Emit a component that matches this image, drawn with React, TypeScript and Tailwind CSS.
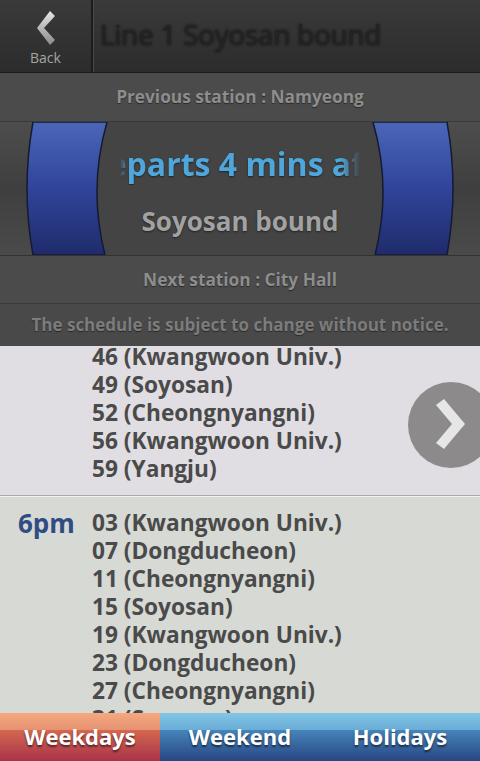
import React from 'react';

const earlier = [
  '46 (Kwangwoon Univ.)',
  '49 (Soyosan)',
  '52 (Cheongnyangni)',
  '56 (Kwangwoon Univ.)',
  '59 (Yangju)',
];

const sixPm = [
  '03 (Kwangwoon Univ.)',
  '07 (Dongducheon)',
  '11 (Cheongnyangni)',
  '15 (Soyosan)',
  '19 (Kwangwoon Univ.)',
  '23 (Dongducheon)',
  '27 (Cheongnyangni)',
  '31 (Soyosan)',
];

function Arcs() {
  return (
    <svg className="absolute inset-0" width="480" height="133" viewBox="0 0 480 133">
      <defs>
        <linearGradient id="arcBlue" x1="0" y1="0" x2="0" y2="1">
          <stop offset="0" stopColor="#4b66b8" />
          <stop offset="0.5" stopColor="#30449a" />
          <stop offset="1" stopColor="#1f2b6a" />
        </linearGradient>
        <linearGradient id="bandBg" x1="0" y1="0" x2="0" y2="1">
          <stop offset="0" stopColor="#4d4d4d" />
          <stop offset="0.5" stopColor="#3f3f3f" />
          <stop offset="1" stopColor="#4a4a4a" />
        </linearGradient>
      </defs>
      <rect width="480" height="133" fill="url(#bandBg)" />
      <path d="M100 0 Q80 66 100 133 L380 133 Q400 66 380 0 Z" fill="#444444" />
      <path d="M33 0 Q21 66 33 133 L105 133 Q88 66 107 0 Z" fill="url(#arcBlue)" stroke="#151a33" strokeWidth="1.5" />
      <path d="M447 0 Q459 66 447 133 L375 133 Q392 66 373 0 Z" fill="url(#arcBlue)" stroke="#151a33" strokeWidth="1.5" />
    </svg>
  );
}

export default function App() {
  return (
    <div className="w-[480px] h-[761px] overflow-hidden relative flex flex-col bg-[#d7d9d5] font-['Open_Sans','DejaVu_Sans',sans-serif]">
      {/* Header */}
      <div className="h-[73px] shrink-0 flex border-b border-[#1b1b1b] bg-gradient-to-b from-[#3a3a3a] to-[#2c2c2c]">
        <div className="w-[91px] flex flex-col items-center pt-[10px]">
          <svg width="20" height="36" viewBox="35 9 20 36">
            <defs>
              <linearGradient id="chev" x1="0" y1="0" x2="0" y2="1">
                <stop offset="0" stopColor="#e6e6e6" />
                <stop offset="1" stopColor="#8a8a8a" />
              </linearGradient>
            </defs>
            <polygon points="49,10 54,15 43,27 54,39 49,44 36,27" fill="url(#chev)" />
          </svg>
          <span className="text-[14px] leading-none mt-[5px] text-[#a4a4a4]">Back</span>
        </div>
        <div className="w-[2px] bg-[#1c1c1c]" />
        <div className="w-[1px] bg-[#4a4a4a]" />
        <div className="flex-1 flex items-center pl-[6px] pb-[4px]">
          <span className="text-[28px] text-[#232323] tracking-[-0.3px] [text-shadow:0_0_3px_#111]">Line 1 Soyosan bound</span>
        </div>
      </div>

      {/* Previous station */}
      <div className="h-[49px] shrink-0 flex items-center justify-center bg-[#4b4b4b] border-b border-[#393939]">
        <span className="text-[17.3px] font-bold text-[#8d8d8d] [text-shadow:0_1px_1px_#2a2a2a]">Previous station : Namyeong</span>
      </div>

      {/* Departure band */}
      <div className="h-[134px] shrink-0 relative border-b border-[#333333]">
        <Arcs />
        <div className="relative flex flex-col items-center pt-[21px]">
          <div className="w-[240px] overflow-hidden [mask-image:linear-gradient(to_right,transparent,black_4%,black_92%,transparent)]">
            <span className="block whitespace-nowrap ml-[-36px] text-[32px] leading-[42px] font-bold text-[#4ea6da] [text-shadow:0_1px_2px_#222]">Departs 4 mins after</span>
          </div>
          <span className="mt-[18px] text-[26px] leading-[36px] font-bold text-[#a2a2a2] [text-shadow:0_1px_2px_#222]">Soyosan bound</span>
        </div>
      </div>

      {/* Next station */}
      <div className="h-[48px] shrink-0 flex items-center justify-center bg-[#4b4b4b] border-b border-[#393939]">
        <span className="text-[17.3px] font-bold text-[#8d8d8d] [text-shadow:0_1px_1px_#2a2a2a]">Next station : City Hall</span>
      </div>

      {/* Notice */}
      <div className="h-[42px] shrink-0 flex items-center justify-center bg-[#494949]">
        <span className="text-[17px] font-bold text-[#7c7c7c] [text-shadow:0_1px_1px_#2a2a2a]">The schedule is subject to change without notice.</span>
      </div>

      {/* Schedule */}
      <div className="flex-1 overflow-hidden relative">
        <div className="bg-[#e1dee3] h-[150px] border-b border-[#a9a9a9] overflow-hidden">
          <div className="-mt-[3px] pl-[92px]">
            {earlier.map((t) => (
              <div key={t} className="h-[28px] leading-[28px] text-[22.7px] font-bold text-[#4a4a4a]">{t}</div>
            ))}
          </div>
        </div>
        <div className="flex pt-[12px] border-t border-[#f2f2f2]">
          <div className="w-[92px] pl-[18px] h-[28px] leading-[28px] text-[26px] font-bold text-[#2f4d82]">6pm</div>
          <div>
            {sixPm.map((t) => (
              <div key={t} className="h-[28px] leading-[28px] text-[22.7px] font-bold text-[#4a4a4a]">{t}</div>
            ))}
          </div>
        </div>

        {/* Next page button */}
        <div className="absolute left-[408px] top-[36px] w-[86px] h-[86px] rounded-full bg-[#8c8a8b]">
          <svg className="absolute inset-0" width="86" height="86" viewBox="408 382 86 86">
            <polygon points="436,405 444,399 465,424 444,449 436,443 452,424" fill="#e6e6e6" />
          </svg>
        </div>
      </div>

      {/* Tabs */}
      <div className="h-[48px] shrink-0 grid grid-cols-3 text-[22px] font-bold text-white [text-shadow:0_2px_2px_rgba(0,0,0,0.55)]">
        <div className="flex items-center justify-center pb-[1px] bg-[linear-gradient(to_bottom,#f4a97f_0%,#e69272_35%,#d3674f_36%,#a9334a_100%)]">Weekdays</div>
        <div className="col-span-2 grid grid-cols-2 bg-[linear-gradient(to_bottom,#84c6e6_0%,#69acd6_35%,#4584ba_36%,#284682_100%)]">
          <div className="flex items-center justify-center pb-[1px]">Weekend</div>
          <div className="flex items-center justify-center pb-[1px]">Holidays</div>
        </div>
      </div>
    </div>
  );
}
